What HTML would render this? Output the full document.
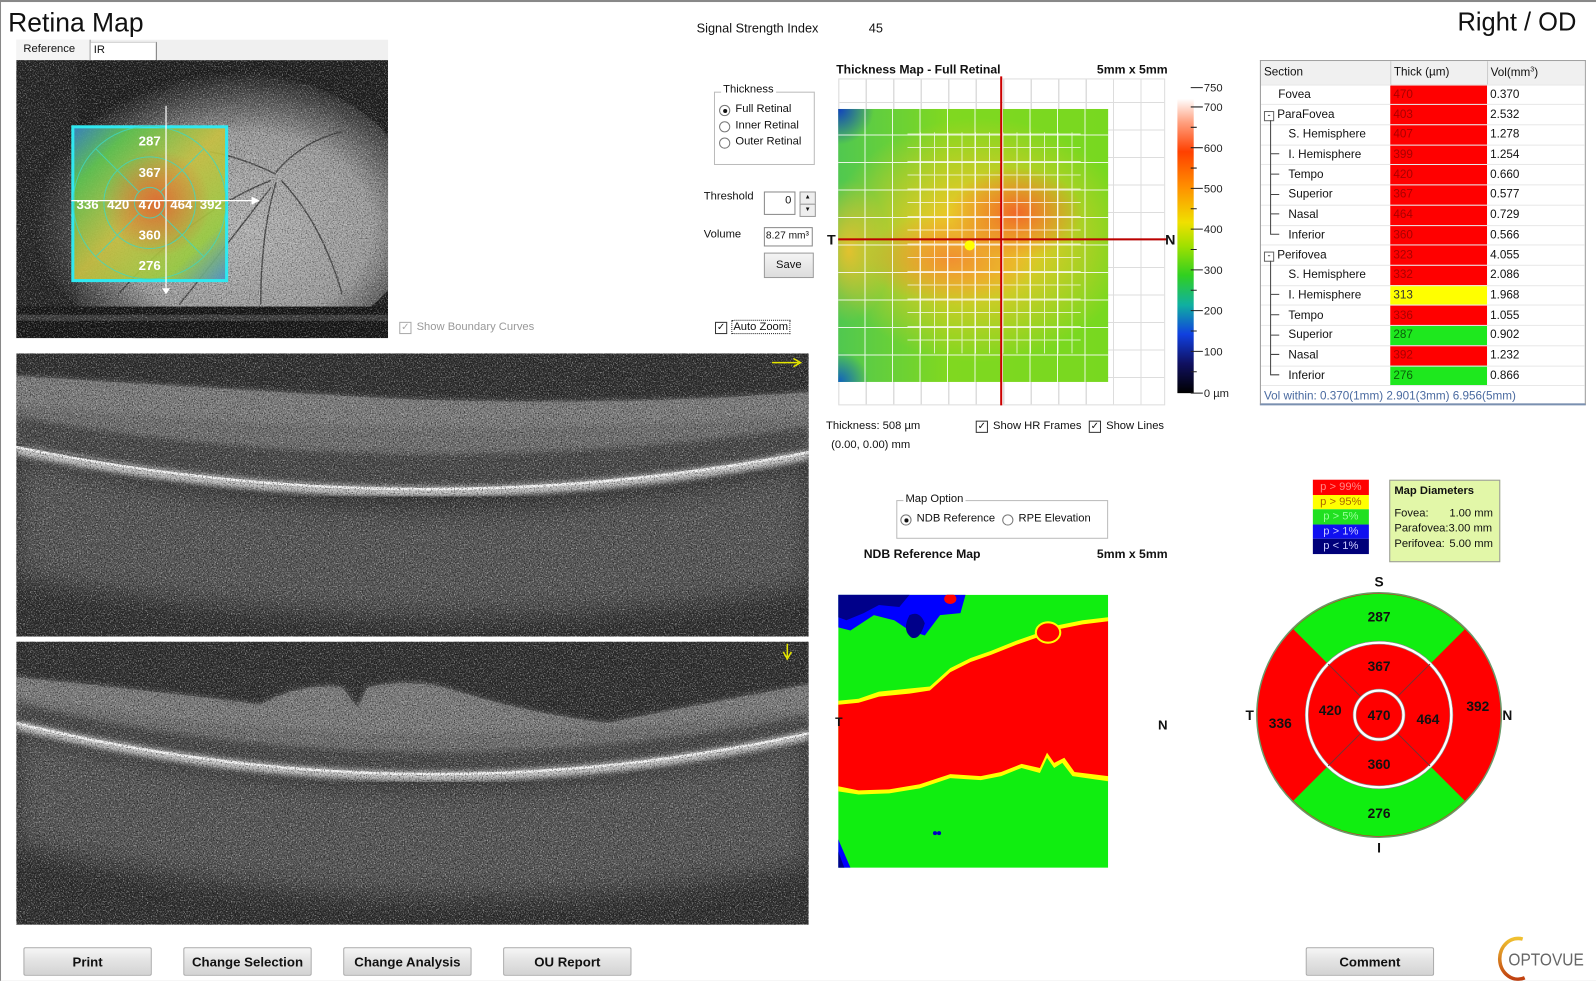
<!DOCTYPE html>
<html><head><meta charset="utf-8"><style>
html,body{margin:0;padding:0;background:#fff;overflow:hidden}
body{width:1596px;height:981px;position:relative}
#p{position:absolute;left:0;top:0;width:1567px;height:963px;transform:scale(1.01851);transform-origin:0 0;font-family:"Liberation Sans",sans-serif;font-size:11.5px;color:#111;border-top:2px solid #888;border-left:1px solid #888;box-sizing:border-box}
.a{position:absolute}
.lbl{position:absolute;white-space:nowrap}
.btn{position:absolute;top:928px;width:126px;height:28px;border:1px solid #aaa;border-radius:2px;background:linear-gradient(#f6f6f6,#e2e2e2 50%,#d4d4d4);font-weight:bold;font-size:13px;text-align:center;line-height:28px;color:#111;box-sizing:border-box}
.cb{position:absolute;width:10px;height:10px;border:1px solid #333;background:#fff;font-size:10px;line-height:10px;text-align:center}
.rad{position:absolute;width:9px;height:9px;border:1px solid #777;border-radius:50%;background:#fff}
.rad.on::after{content:"";position:absolute;left:2.5px;top:2.5px;width:4px;height:4px;border-radius:50%;background:#111}
table{border-collapse:collapse}
#tb td{height:19.73px;padding:0 3px;border-bottom:1px solid #e8e8e8;font-size:11.5px;white-space:nowrap;box-sizing:border-box}
.r{background:#f00;color:#a00}.y{background:#ff0;color:#333}.g{background:#1ee81e;color:#0a600a}
</style></head><body><div id="p">

<svg width="0" height="0" style="position:absolute"><defs>
<filter id="nw" x="0" y="0" width="1" height="1"><feTurbulence type="fractalNoise" baseFrequency="0.8" numOctaves="2" seed="7"/><feColorMatrix values="0 0 0 0 1 0 0 0 0 1 0 0 0 0 1 4 0 0 0 -2.0"/></filter>
<filter id="nb" x="0" y="0" width="1" height="1"><feTurbulence type="fractalNoise" baseFrequency="0.8" numOctaves="2" seed="19"/><feColorMatrix values="0 0 0 0 0 0 0 0 0 0 0 0 0 0 0 4 0 0 0 -2.0"/></filter>
<filter id="b1"><feGaussianBlur stdDeviation="3"/></filter>
<filter id="b2"><feGaussianBlur stdDeviation="12"/></filter>
</defs></svg>

<div class="lbl" style="left:7px;top:5px;font-size:26px;">Retina Map</div>
<div class="lbl" style="left:1430px;top:6px;font-size:25px;">Right / OD</div>
<div class="lbl" style="left:683px;top:19px;font-size:12.5px;">Signal Strength Index</div>
<div class="lbl" style="left:852px;top:19px;font-size:12.5px;">45</div>

<!-- tabs -->
<div class="a" style="left:15px;top:37px;width:365px;height:20px;background:#f0f0f0"></div>
<div class="a" style="left:15px;top:37px;width:72px;height:20px;background:#f4f4f4;border-right:1px solid #999"></div>
<div class="lbl" style="left:22px;top:40px;font-size:11px;">Reference</div>
<div class="a" style="left:88px;top:39px;width:64px;height:18px;background:#fff;border-right:1px solid #777;border-top:1px solid #ccc"></div>
<div class="lbl" style="left:91px;top:41px;font-size:11px;">IR</div>

<!-- fundus -->
<svg class="a" style="left:15px;top:57px" width="365" height="273" viewBox="0 0 365 273">
<defs>
<radialGradient id="fg" cx="0.55" cy="0.55" r="0.55"><stop offset="0" stop-color="#b4b4b4"/><stop offset="0.6" stop-color="#9c9c9c"/><stop offset="0.85" stop-color="#4a4a4a"/><stop offset="1" stop-color="#1c1c1c"/></radialGradient>
<linearGradient id="ov" x1="0" y1="0" x2="1" y2="1"><stop offset="0" stop-color="#3a8ad0"/><stop offset="0.2" stop-color="#60c850"/><stop offset="0.5" stop-color="#c8c040"/><stop offset="0.8" stop-color="#98cc40"/><stop offset="1" stop-color="#4a90c8"/></linearGradient>
<radialGradient id="ov2" cx="0.55" cy="0.5" r="0.35"><stop offset="0" stop-color="#e06030" stop-opacity="0.85"/><stop offset="1" stop-color="#e06030" stop-opacity="0"/></radialGradient>
</defs>
<rect width="365" height="273" fill="#1e1e1e"/>
<ellipse cx="205" cy="150" rx="190" ry="140" fill="url(#fg)"/>
<rect x="0" y="0" width="60" height="273" fill="#2a2a2a" opacity="0.4"/>
<rect x="0" y="242" width="365" height="31" fill="#151515"/>
<rect x="0" y="250" width="365" height="6" fill="#3a3a3a"/>
<g stroke="#333" stroke-width="1.4" fill="none" opacity="0.8">
<path d="M255 110 Q280 80 320 70"/><path d="M255 120 Q240 170 240 240"/><path d="M250 125 Q200 190 160 240"/><path d="M260 118 Q300 160 320 230"/><path d="M250 118 Q170 150 100 230"/><path d="M255 112 Q220 95 190 90"/>
</g>
<rect width="365" height="273" filter="url(#nw)" opacity="0.4"/>
<rect width="365" height="273" filter="url(#nb)" opacity="0.4"/>
<rect x="55" y="65" width="151" height="151" fill="url(#ov)" opacity="0.9"/>
<rect x="55" y="65" width="151" height="151" fill="url(#ov2)"/>
<rect x="55.5" y="65.5" width="151" height="151" fill="none" stroke="#30e8f0" stroke-width="3"/>
<g fill="none" stroke="#40d8c0" stroke-width="1" opacity="0.8">
<circle cx="131" cy="140" r="75"/><circle cx="131" cy="140" r="45"/><circle cx="131" cy="140" r="15"/>
<path d="M78 87 L99 108 M184 87 L163 108 M78 193 L99 172 M184 193 L163 172 M120 129 L99 108 M142 129 L163 108 M120 151 L99 172 M142 151 L163 172"/>
</g>
<path d="M147 45 V228 M54 138 H235" stroke="#fff" stroke-width="1.2"/>
<path d="M231 134 L239 138 L231 142 Z M143 224 L147 230 L151 224Z" fill="#fff"/>
<g fill="#fff" font-family="Liberation Sans" font-size="13" font-weight="bold" text-anchor="middle">
<text x="131" y="84">287</text><text x="131" y="115">367</text><text x="131" y="146">470</text><text x="70" y="146">336</text><text x="100" y="146">420</text><text x="162" y="146">464</text><text x="191" y="146">392</text><text x="131" y="176">360</text><text x="131" y="206">276</text>
</g>
</svg>

<div class="cb" style="left:391px;top:314px;border-color:#aaa;color:#aaa">✓</div>
<div class="lbl" style="left:408px;top:313px;color:#999;font-size:11px;">Show Boundary Curves</div>
<div class="cb" style="left:701px;top:314px;">✓</div>
<div class="lbl" style="left:717px;top:312px;font-size:11px;border:1px dotted #333;padding:0 1px">Auto Zoom</div>

<!-- thickness group -->
<div class="a" style="left:700px;top:88px;width:97px;height:70px;border:1px solid #bbb"></div>
<div class="lbl" style="left:707px;top:80px;background:#fff;padding:0 2px;font-size:11px;">Thickness</div>
<div class="rad on" style="left:705px;top:101px"></div><div class="lbl" style="left:721px;top:99px;font-size:11px">Full Retinal</div>
<div class="rad" style="left:705px;top:117px"></div><div class="lbl" style="left:721px;top:115px;font-size:11px">Inner Retinal</div>
<div class="rad" style="left:705px;top:133px"></div><div class="lbl" style="left:721px;top:131px;font-size:11px">Outer Retinal</div>
<div class="lbl" style="left:690px;top:185px;font-size:11px">Threshold</div>
<div class="a" style="left:749px;top:186px;width:31px;height:23px;border:1px solid #888;background:#fff;text-align:right;font-size:11px;box-sizing:border-box;padding:2px 3px">0</div>
<div class="a" style="left:784px;top:186px;width:14px;height:11px;border:1px solid #999;background:#eee;font-size:6px;text-align:center;line-height:11px">▲</div>
<div class="a" style="left:784px;top:198px;width:14px;height:11px;border:1px solid #999;background:#eee;font-size:6px;text-align:center;line-height:11px">▼</div>
<div class="lbl" style="left:690px;top:222px;font-size:11px">Volume</div>
<div class="a" style="left:749px;top:221px;width:48px;height:19px;border:1px solid #888;background:#fff;font-size:10px;box-sizing:border-box;padding:2px 1px;white-space:nowrap;overflow:hidden">8.27 mm³</div>
<div class="a" style="left:749px;top:246px;width:49px;height:25px;border:1px solid #999;background:linear-gradient(#f4f4f4,#ddd);font-size:11px;text-align:center;line-height:23px;box-sizing:border-box">Save</div>

<!-- OCT scans -->
<svg class="a" style="left:15px;top:345px" width="778" height="278" viewBox="0 0 778 278" preserveAspectRatio="none">
<rect width="778" height="278" fill="#2e2e2e"/>
<path d="M0 100 Q390 200 778 110 L778 230 Q390 290 0 220Z" fill="#555" filter="url(#b2)"/>
<path d="M0 22 Q200 35 380 45 Q600 52 778 38 L778 100 Q390 175 0 88Z" fill="#6e6e6e"/>
<path d="M0 22 Q200 35 380 45 Q600 52 778 38 L778 60 Q390 90 0 50Z" fill="#7c7c7c" filter="url(#b1)"/>
<path d="M0 62 Q380 130 778 72 L778 95 Q390 168 0 88Z" fill="#464646" filter="url(#b1)"/>
<path d="M0 95 Q390 175 778 100" stroke="#d8d8d8" stroke-width="8" fill="none" filter="url(#b1)"/>
<path d="M0 92 Q390 172 778 97" stroke="#f4f4f4" stroke-width="2.5" fill="none"/>
<rect width="778" height="278" filter="url(#nw)" opacity="0.45"/>
<rect width="778" height="278" filter="url(#nb)" opacity="0.55"/>
<path d="M742 9 H768 M763 5 L770 9 L763 13" stroke="#e6e600" stroke-width="1.5" fill="none"/>
</svg>
<svg class="a" style="left:15px;top:628px" width="778" height="278" viewBox="0 0 778 278" preserveAspectRatio="none">
<rect width="778" height="278" fill="#2e2e2e"/>
<path d="M0 85 Q390 195 778 95 L778 220 Q390 290 0 200Z" fill="#555" filter="url(#b2)"/>
<path d="M0 35 Q150 50 240 62 Q280 40 320 45 L335 65 L345 45 Q390 35 430 48 Q500 70 580 80 Q680 60 778 42 L778 88 Q390 180 0 78Z" fill="#6e6e6e"/>
<path d="M0 35 Q150 50 240 62 Q280 40 320 45 L335 65 L345 45 Q390 35 430 48 Q500 70 580 80 Q680 60 778 42 L778 65 Q390 120 0 55Z" fill="#7c7c7c" filter="url(#b1)"/>
<path d="M0 60 Q380 150 778 72 L778 90 Q390 170 0 78Z" fill="#464646" filter="url(#b1)"/>
<path d="M0 82 Q390 178 778 92" stroke="#d8d8d8" stroke-width="8" fill="none" filter="url(#b1)"/>
<path d="M0 80 Q390 175 778 90" stroke="#f4f4f4" stroke-width="2.5" fill="none"/>
<rect width="778" height="278" filter="url(#nw)" opacity="0.45"/>
<rect width="778" height="278" filter="url(#nb)" opacity="0.55"/>
<path d="M757 2 V15 M753 10 L757 17 L761 10" stroke="#e6e600" stroke-width="1.5" fill="none"/>
</svg>

<!-- Thickness map -->
<div class="lbl" style="left:820px;top:59px;font-weight:bold;font-size:12px">Thickness Map - Full Retinal</div>
<div class="lbl" style="left:1076px;top:59px;font-weight:bold;font-size:12px">5mm x 5mm</div>
<div class="a" style="left:822px;top:75px;width:321px;height:321px;border:1px solid #ddd;box-sizing:border-box;background:repeating-linear-gradient(90deg,transparent 0 26px,#ddd 26px 27px),repeating-linear-gradient(0deg,transparent 0 26px,#ddd 26px 27px)"></div>
<div class="a" style="left:822px;top:105px;width:265px;height:268px;background:
radial-gradient(ellipse 35px 35px at 0 0,#1040c0,transparent),
radial-gradient(ellipse 30px 30px at 0 100%,#1060c0,transparent),
radial-gradient(ellipse 65px 45px at 66% 38%,#f06828,transparent),
radial-gradient(ellipse 85px 45px at 42% 55%,#f09030,transparent),
radial-gradient(ellipse 150px 120px at 52% 48%,#e8c828 30%,transparent),
radial-gradient(ellipse 40px 70px at 4% 52%,#e0c030,transparent),
linear-gradient(90deg,#50c850,#80d820 40%,#78d820);"></div>
<div class="a" style="left:822px;top:105px;width:265px;height:268px;opacity:0.85;background:repeating-linear-gradient(90deg,transparent 0 26px,#fff 26px 27px),repeating-linear-gradient(0deg,transparent 0 26px,#fff 26px 27px)"></div>
<div class="a" style="left:890px;top:128px;width:170px;height:217px;opacity:0.7;background:repeating-linear-gradient(90deg,transparent 0 12.5px,#fff 12.5px 13.5px),repeating-linear-gradient(0deg,transparent 0 12.5px,#fff 12.5px 13.5px)"></div>
<div class="a" style="left:981px;top:73px;width:2px;height:323px;background:#c00"></div>
<div class="a" style="left:822px;top:232px;width:322px;height:2px;background:#b00"></div>
<div class="a" style="left:946px;top:234px;width:10px;height:10px;border-radius:50%;background:#ff0"></div>
<div class="lbl" style="left:811px;top:225px;font-weight:bold;font-size:14px">T</div>
<div class="lbl" style="left:1143px;top:225px;font-weight:bold;font-size:14px">N</div>
<div class="a" style="left:1155px;top:95px;width:16px;height:289px;background:linear-gradient(0deg,#000 0%,#101060 10%,#1040e0 20%,#10b0a0 30%,#30d020 40%,#a0e000 50%,#f0e000 58%,#ff9000 70%,#ff4000 82%,#ffa080 92%,#fff 100%)"></div>
<svg class="a" style="left:1168px;top:76px" width="50" height="320">
<g stroke="#222" stroke-width="1"><path d="M0 8H12M0 27H12M0 47H6M0 67H12M0 87H6M0 107H12M0 127H6M0 147H12M0 167H6M0 187H12M0 207H6M0 227H12M0 247H6M0 267H12M0 287H6M0 308H12"/></g>
<g font-family="Liberation Sans" font-size="11" fill="#222"><text x="13" y="12">750</text><text x="13" y="31">700</text><text x="13" y="71">600</text><text x="13" y="111">500</text><text x="13" y="151">400</text><text x="13" y="191">300</text><text x="13" y="231">200</text><text x="13" y="271">100</text><text x="13" y="312">0 µm</text></g>
</svg>
<div class="lbl" style="left:810px;top:410px;font-size:11px">Thickness: 508 µm</div>
<div class="lbl" style="left:815px;top:429px;font-size:11px">(0.00, 0.00) mm</div>
<div class="cb" style="left:957px;top:411px;">✓</div><div class="lbl" style="left:974px;top:410px;font-size:11px">Show HR Frames</div>
<div class="cb" style="left:1068px;top:411px;">✓</div><div class="lbl" style="left:1085px;top:410px;font-size:11px">Show Lines</div>

<!-- table -->
<div class="a" style="left:1236px;top:57px;width:320px;height:339px;border:1px solid #999;border-bottom:2px solid #7a90b0;box-sizing:border-box;background:#fff;overflow:hidden">
<table id="tb" style="width:318px">
<tr style="background:#f0f0f0"><td style="width:127px;height:23px;border-right:1px solid #ccc">Section</td><td style="width:95px;border-right:1px solid #ccc">Thick (µm)</td><td>Vol(mm<sup style="font-size:7px">3</sup>)</td></tr>
<tr><td style="padding-left:17px">Fovea</td><td class="r">470</td><td>0.370</td></tr>
<tr><td><span style="display:inline-block;width:8px;height:8px;border:1px solid #666;font-size:9px;line-height:7px;text-align:center;margin-right:3px">-</span>ParaFovea</td><td class="r">403</td><td>2.532</td></tr>
<tr><td style="padding-left:27px">S. Hemisphere</td><td class="r">407</td><td>1.278</td></tr>
<tr><td style="padding-left:27px">I. Hemisphere</td><td class="r">399</td><td>1.254</td></tr>
<tr><td style="padding-left:27px">Tempo</td><td class="r">420</td><td>0.660</td></tr>
<tr><td style="padding-left:27px">Superior</td><td class="r">367</td><td>0.577</td></tr>
<tr><td style="padding-left:27px">Nasal</td><td class="r">464</td><td>0.729</td></tr>
<tr><td style="padding-left:27px">Inferior</td><td class="r">360</td><td>0.566</td></tr>
<tr><td><span style="display:inline-block;width:8px;height:8px;border:1px solid #666;font-size:9px;line-height:7px;text-align:center;margin-right:3px">-</span>Perifovea</td><td class="r">323</td><td>4.055</td></tr>
<tr><td style="padding-left:27px">S. Hemisphere</td><td class="r">332</td><td>2.086</td></tr>
<tr><td style="padding-left:27px">I. Hemisphere</td><td class="y">313</td><td>1.968</td></tr>
<tr><td style="padding-left:27px">Tempo</td><td class="r">336</td><td>1.055</td></tr>
<tr><td style="padding-left:27px">Superior</td><td class="g">287</td><td>0.902</td></tr>
<tr><td style="padding-left:27px">Nasal</td><td class="r">392</td><td>1.232</td></tr>
<tr><td style="padding-left:27px">Inferior</td><td class="g">276</td><td>0.866</td></tr>
<tr><td colspan="3" style="color:#4a6aa0;border:none">Vol within: 0.370(1mm) 2.901(3mm) 6.956(5mm)</td></tr>
</table>
<svg class="a" style="left:0;top:0" width="30" height="320"><g stroke="#444" stroke-width="1" fill="none"><path d="M9.5 58V170H18M9.5 91H18M9.5 111H18M9.5 131H18M9.5 150H18"/><path d="M9.5 196V308H18M9.5 229H18M9.5 249H18M9.5 269H18M9.5 288H18"/></g></svg>
</div>

<!-- Map option -->
<div class="a" style="left:879px;top:489px;width:206px;height:36px;border:1px solid #bbb"></div>
<div class="lbl" style="left:886px;top:482px;background:#fff;padding:0 2px;font-size:11px">Map Option</div>
<div class="rad on" style="left:883px;top:503px"></div><div class="lbl" style="left:899px;top:501px;font-size:11px">NDB Reference</div>
<div class="rad" style="left:983px;top:503px"></div><div class="lbl" style="left:999px;top:501px;font-size:11px">RPE Elevation</div>
<div class="lbl" style="left:847px;top:535px;font-weight:bold;font-size:12px">NDB Reference Map</div>
<div class="lbl" style="left:1076px;top:535px;font-weight:bold;font-size:12px">5mm x 5mm</div>

<svg class="a" style="left:822px;top:582px" width="265" height="268" viewBox="0 0 265 268">
<rect width="265" height="268" fill="#10ee10"/>
<path d="M0 0 H125 L120 18 L100 20 L85 40 L70 35 L55 25 L35 20 L12 35 L0 32Z" fill="#0000ff"/>
<path d="M0 0 H70 L60 12 L40 10 L25 18 L8 25 L0 22Z M70 20 Q80 15 85 28 Q80 45 72 42 Q62 35 70 20Z" fill="#00008a"/>
<path d="M0 240 L12 268 H0Z" fill="#0000ff"/><path d="M0 252 L6 268 H0Z" fill="#00008a"/>
<path d="M0 104 L20 102 L40 95 L70 92 L90 90 L110 72 L130 62 L150 55 L175 45 L195 38 L215 30 L240 25 L265 22 L265 183 L230 178 L220 165 L212 170 L205 160 L198 175 L180 170 L160 178 L140 182 L110 180 L80 190 L50 195 L20 196 L0 193Z" fill="#ffff00"/>
<path d="M0 108 L20 106 L40 100 L70 97 L90 94 L110 76 L130 66 L150 59 L175 49 L195 42 L215 34 L240 29 L265 26 L265 178 L232 174 L222 160 L212 165 L205 155 L198 170 L180 166 L160 174 L140 178 L110 176 L80 186 L50 191 L20 192 L0 188Z" fill="#ff0000"/>
<ellipse cx="206" cy="37" rx="13" ry="11" fill="#ffff00"/><ellipse cx="206" cy="37" rx="11" ry="9" fill="#ff0000"/>
<ellipse cx="110" cy="4" rx="6" ry="5" fill="#ff0000"/>
<circle cx="95" cy="234" r="2" fill="#0000c0"/><circle cx="99" cy="234" r="2" fill="#0000c0"/>
</svg>
<div class="lbl" style="left:819px;top:700px;font-weight:bold;font-size:12px">T</div>
<div class="lbl" style="left:1136px;top:702px;font-weight:bold;font-size:13px">N</div>

<!-- legend -->
<div class="a" style="left:1288px;top:469px;width:55px;font-size:11px;line-height:14.6px;text-align:center">
<div style="background:#f00;color:#f88">p &gt; 99%</div>
<div style="background:#ff0;color:#a60">p &gt; 95%</div>
<div style="background:#20e020;color:#9f9">p &gt; 5%</div>
<div style="background:#1010f0;color:#ccf">p &gt; 1%</div>
<div style="background:#00007a;color:#ccf">p &lt; 1%</div>
</div>
<div class="a" style="left:1363px;top:469px;width:109px;height:81px;background:#e2f7a8;border:1px solid #999;box-sizing:border-box;font-size:11px;padding:3px 4px;line-height:15px">
<div style="font-weight:bold">Map Diameters</div>
<div style="margin-top:7px">Fovea:<span style="position:absolute;left:58px">1.00 mm</span></div>
<div>Parafovea:3.00 mm</div>
<div>Perifovea:<span style="position:absolute;left:58px">5.00 mm</span></div>
</div>

<!-- sector chart -->
<svg class="a" style="left:1213px;top:560px" width="280" height="280" viewBox="-140 -140 280 280">
<circle r="120" fill="#ff0000" stroke="#6a9a6a" stroke-width="1.5"/>
<path d="M-84.1 -84.1 A119 119 0 0 1 84.1 -84.1 L50.2 -50.2 A71 71 0 0 0 -50.2 -50.2Z" fill="#10ee10"/>
<path d="M-84.1 84.1 A119 119 0 0 0 84.1 84.1 L50.2 50.2 A71 71 0 0 1 -50.2 50.2Z" fill="#10ee10"/>
<circle r="71" fill="#ff0000" stroke="#fff" stroke-width="3"/>
<circle r="72.5" fill="none" stroke="#888" stroke-width="0.6"/><circle r="69.5" fill="none" stroke="#888" stroke-width="0.6"/>
<path d="M-17 -17 L-50 -50 M17 -17 L50 -50 M-17 17 L-50 50 M17 17 L50 50" stroke="#7a3030" stroke-width="1"/>
<circle r="24" fill="#ff0000" stroke="#fff" stroke-width="3"/>
<circle r="25.5" fill="none" stroke="#888" stroke-width="0.6"/><circle r="22.5" fill="none" stroke="#888" stroke-width="0.6"/>
<g font-family="Liberation Sans" font-weight="bold" font-size="13.5" fill="#111" text-anchor="middle">
<text x="0" y="-92">287</text><text x="0" y="-43">367</text><text x="0" y="5">470</text><text x="-48" y="0">420</text><text x="48" y="9">464</text><text x="-97" y="13">336</text><text x="97" y="-4">392</text><text x="0" y="53">360</text><text x="0" y="101">276</text>
<text x="0" y="-126">S</text><text x="0" y="135">I</text><text x="-127" y="5">T</text><text x="126" y="5">N</text>
</g>
</svg>

<!-- buttons -->
<div class="btn" style="left:22px">Print</div>
<div class="btn" style="left:179px">Change Selection</div>
<div class="btn" style="left:336px">Change Analysis</div>
<div class="btn" style="left:493px">OU Report</div>
<div class="btn" style="left:1281px">Comment</div>

<!-- logo -->
<svg class="a" style="left:1466px;top:914px" width="95" height="48">
<defs><linearGradient id="lg" x1="0" y1="0" x2="0" y2="1"><stop offset="0" stop-color="#f0c030"/><stop offset="1" stop-color="#c04010"/></linearGradient></defs>
<path d="M28 6 A18 20 0 1 0 30 44" fill="none" stroke="url(#lg)" stroke-width="3.5"/>
<text x="14" y="32" font-family="Liberation Sans" font-size="17" fill="#666" textLength="74" lengthAdjust="spacingAndGlyphs">OPTOVUE</text>
</svg>
<div class="a" style="left:0;top:961px;width:1567px;height:1px;background:#ccc"></div>
</div></body></html>
